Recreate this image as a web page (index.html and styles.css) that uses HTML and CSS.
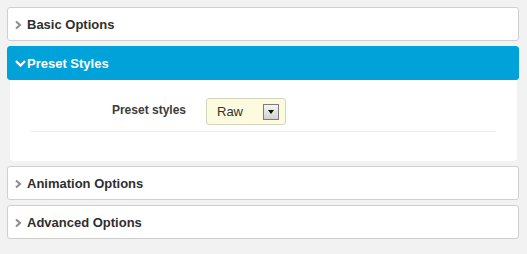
FILE: index.html
```html
<!DOCTYPE html>
<html lang="en">
<head>
  <meta charset="UTF-8" />
  <title>Module Options</title>
  <link rel="stylesheet" href="styles.css">
</head>
<body>
  <div class="panel">
    <div class="panel-head">
      <svg class="arrow" width="12" height="10" viewBox="0 0 12 10"><polyline points="1,1.5 5,5 1,8.5" /></svg>Basic Options
    </div>
  </div>

  <div class="panel open">
    <div class="panel-head">
      <svg class="arrow" width="12" height="10" viewBox="0 0 12 10"><polyline points="1,2 5.5,6.5 10,2" /></svg>Preset Styles
    </div>
    <div class="panel-body">
      <div class="field">
        <label class="field-label">Preset styles</label>
        <div class="select">
          <span>Raw</span>
          <span class="select-btn"><i></i></span>
        </div>
      </div>
      <hr class="divider">
    </div>
  </div>

  <div class="panel">
    <div class="panel-head">
      <svg class="arrow" width="12" height="10" viewBox="0 0 12 10"><polyline points="1,1.5 5,5 1,8.5" /></svg>Animation Options
    </div>
  </div>

  <div class="panel">
    <div class="panel-head">
      <svg class="arrow" width="12" height="10" viewBox="0 0 12 10"><polyline points="1,1.5 5,5 1,8.5" /></svg>Advanced Options
    </div>
  </div>
</body>
</html>
```

FILE: styles.css
```css
body {
  margin: 0;
  padding: 7px 8px 7px 7px;
  background: #f2f2f2;
  font-family: "Liberation Sans", Arial, sans-serif;
}
.panel {
  margin-bottom: 5px;
}
.panel-head {
  display: flex;
  align-items: center;
  height: 32px;
  padding-left: 7px;
  background: #fff;
  border: 1px solid #cfcfcf;
  border-radius: 3px;
  font-size: 13px;
  font-weight: bold;
  color: #2f2f2f;
}
.arrow {
  flex: none;
  margin-top: 1px;
  fill: none;
  stroke: #8c8c8c;
  stroke-width: 2;
}
.open .panel-head {
  background: #00a3d9;
  border-color: #00a3d9;
  color: #fff;
}
.open .arrow {
  stroke: #fff;
  stroke-width: 2.4;
}
.panel-body {
  margin: 0 2px 0 3px;
  padding: 18px 21px 29px 20px;
  background: #fff;
  border-radius: 0 0 4px 4px;
}
.field {
  display: flex;
  align-items: center;
}
.field-label {
  width: 156px;
  padding-right: 20px;
  text-align: right;
  font-size: 12px;
  font-weight: bold;
  color: #3c3c3c;
  margin-top: -3px;
}
.select {
  display: flex;
  align-items: center;
  justify-content: space-between;
  width: 62px;
  height: 25px;
  padding: 0 6px 0 10px;
  background: #fdfbdf;
  border: 1px solid #d6d4bd;
  border-radius: 3px;
  font-size: 13px;
  color: #333;
}
.select-btn {
  display: flex;
  align-items: center;
  justify-content: center;
  width: 14px;
  height: 14px;
  border: 1px solid #7c7c7c;
  background: linear-gradient(#f4f4f4, #d2d2d2);
}
.select-btn i {
  border-left: 3px solid transparent;
  border-right: 3px solid transparent;
  border-top: 4px solid #111;
}
.divider {
  margin: 6px 0 0;
  border: 0;
  border-top: 1px solid #ececec;
}
```
